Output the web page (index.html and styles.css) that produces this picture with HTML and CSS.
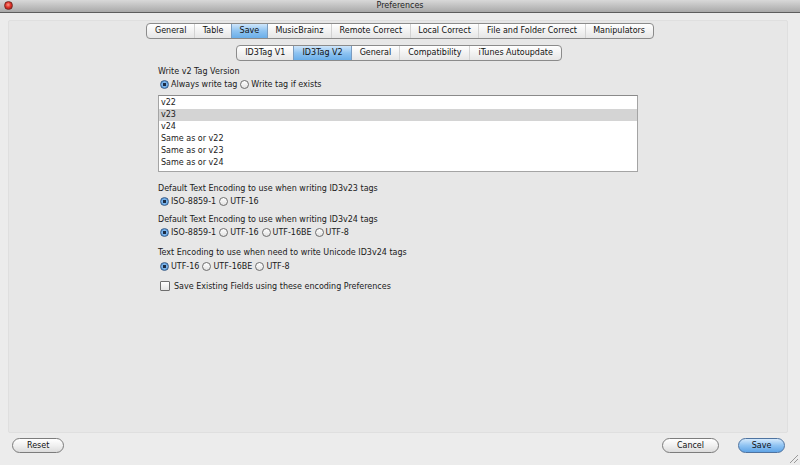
FILE: index.html
```html
<!DOCTYPE html>
<html>
  <head>
    <meta charset="utf-8" />
    <title>Preferences</title>
    <link rel="stylesheet" href="styles.css">
  </head>
  <body>
    <div class="titlebar">
      <span class="close"></span>
      <span class="title">Preferences</span>
    </div>

    <div class="panel">
      <div class="tabs main-tabs">
        <span class="tab">General</span>
        <span class="tab">Table</span>
        <span class="tab selected">Save</span>
        <span class="tab">MusicBrainz</span>
        <span class="tab">Remote Correct</span>
        <span class="tab">Local Correct</span>
        <span class="tab">File and Folder Correct</span>
        <span class="tab">Manipulators</span>
      </div>
      <div class="tabs sub-tabs">
        <span class="tab">ID3Tag V1</span>
        <span class="tab selected">ID3Tag V2</span>
        <span class="tab">General</span>
        <span class="tab">Compatibility</span>
        <span class="tab">iTunes Autoupdate</span>
      </div>

      <div class="content">
        <div class="label">Write v2 Tag Version</div>
        <div class="radios">
          <span class="radio on"></span>Always write tag
          <span class="radio"></span>Write tag if exists
        </div>
        <ul class="list">
          <li>v22</li>
          <li class="selected">v23</li>
          <li>v24</li>
          <li>Same as or v22</li>
          <li>Same as or v23</li>
          <li>Same as or v24</li>
        </ul>

        <div class="label first">Default Text Encoding to use when writing ID3v23 tags</div>
        <div class="radios">
          <span class="radio on"></span>ISO-8859-1
          <span class="radio"></span>UTF-16
        </div>

        <div class="label second">Default Text Encoding to use when writing ID3v24 tags</div>
        <div class="radios">
          <span class="radio on"></span>ISO-8859-1
          <span class="radio"></span>UTF-16
          <span class="radio"></span>UTF-16BE
          <span class="radio"></span>UTF-8
        </div>

        <div class="label third">Text Encoding to use when need to write Unicode ID3v24 tags</div>
        <div class="radios low">
          <span class="radio on"></span>UTF-16
          <span class="radio"></span>UTF-16BE
          <span class="radio"></span>UTF-8
        </div>

        <div class="radios check-row">
          <span class="checkbox"></span>Save Existing Fields using these encoding Preferences
        </div>
      </div>
    </div>

    <div class="footer">
      <button class="btn">Reset</button>
      <span class="spacer"></span>
      <button class="btn">Cancel</button>
      <button class="btn default">Save</button>
    </div>
    <div class="grip"></div>
  </body>
</html>
```

FILE: styles.css
```css
body {
  margin: 0;
  width: 800px;
  height: 465px;
  background-color: #ececec;
  font-family: "DejaVu Sans", sans-serif;
  font-size: 8px;
  color: #1a1a1a;
  position: relative;
  overflow: hidden;
}

.titlebar {
  height: 12px;
  background: linear-gradient(#d8d8d8, #a9a9a9);
  border-bottom: 1px solid #5e5e5e;
  position: relative;
  text-align: center;
}
.titlebar .title {
  line-height: 12px;
  font-size: 8px;
  color: #1e1e1e;
}
.close {
  position: absolute;
  left: 4px;
  top: 1px;
  width: 9px;
  height: 9px;
  border-radius: 50%;
  background: radial-gradient(circle at 45% 40%, #ff9a8a 0, #e0332a 45%, #8e1010 100%);
  border: 1px solid #7a2a22;
  box-sizing: border-box;
}

.panel {
  margin: 7px 12px 0 8px;
  height: 411px;
  background-color: #e7e7e7;
  border: 1px solid #dfdfdf;
  border-radius: 2px;
}

.tabs {
  display: flex;
  width: max-content;
  margin: 0 auto;
  border: 1px solid #8b8b8b;
  border-radius: 4px;
  background: linear-gradient(#ffffff, #f2f2f2 50%, #e6e6e6);
  height: 14px;
  overflow: hidden;
  color: #111;
}
.main-tabs {
  margin-top: 2px;
  transform: translateX(2px);
}
.sub-tabs {
  margin-top: 6px;
  transform: translateX(1px);
}
.tab {
  line-height: 14px;
  padding: 0 8px;
  border-left: 1px solid #d2d2d2;
}
.main-tabs .tab {
  padding: 0 7.6px;
}
.tab:first-child {
  border-left: none;
}
.tab.selected {
  background: linear-gradient(#cfe6fb, #8ec3f1 50%, #6aaee9);
  border-left-color: #7a9cc0;
}
.tab.selected + .tab {
  border-left-color: #7a9cc0;
}

.content {
  padding-left: 149px;
  margin-top: 5px;
}
.label {
  line-height: 11px;
}
.label.first {
  margin-top: 11px;
}
.label.second {
  margin-top: 6px;
}
.label.third {
  margin-top: 8px;
}
.radios {
  display: flex;
  align-items: center;
  height: 14px;
  padding-left: 2px;
}
.radios.low {
  margin-top: 1px;
}
.radio {
  width: 9px;
  height: 9px;
  border-radius: 50%;
  border: 1px solid #6e6e6e;
  background: linear-gradient(#ffffff, #e2e2e2);
  box-sizing: border-box;
  margin: 0 2px 0 3px;
  position: relative;
}
.radios .radio:first-child {
  margin-left: 0;
}
.radio.on {
  background: radial-gradient(circle, #1c2c44 0, #1c2c44 1.5px, #7fb6ea 2px, #3d86d4 100%);
  border-color: #3b5f8a;
}
.checkbox {
  width: 8px;
  height: 8px;
  border: 1px solid #6e6e6e;
  border-radius: 1px;
  background: linear-gradient(#ffffff, #e4e4e4);
  margin-right: 4px;
}
.check-row {
  margin-top: 6px;
}

.list {
  list-style: none;
  margin: 4px 0 0 0;
  padding: 1px 0 2px 0;
  width: 478px;
  background: #ffffff;
  border: 1px solid #a4a4a4;
  border-top-color: #8a8a8a;
}
.list li {
  height: 12px;
  line-height: 12px;
  padding-left: 2px;
}
.list li.selected {
  background-color: #d4d4d4;
}

.footer {
  display: flex;
  align-items: center;
  padding: 0 15px 0 12px;
  margin-top: 5px;
}
.spacer {
  flex: 1;
}
.btn {
  font-family: "DejaVu Sans", sans-serif;
  font-size: 8px;
  color: #111;
  height: 15px;
  border: 1px solid #7c7c7c;
  border-radius: 8px;
  background: linear-gradient(#ffffff, #f0f0f0 50%, #dcdcdc);
  padding: 0 14px;
  min-width: 51px;
  margin-left: 19px;
}
.btn:first-child {
  margin-left: 0;
}
.btn.default {
  background: linear-gradient(#d4e9fc, #8fc3f2 50%, #5fa4e6);
  border-color: #4e73a0;
  min-width: 47px;
  padding: 0 10px;
}

.grip {
  position: absolute;
  right: 2px;
  bottom: 2px;
  width: 8px;
  height: 8px;
  background: linear-gradient(135deg, transparent 45%, #999 45%, #999 52%, transparent 52%, transparent 70%, #999 70%, #999 77%, transparent 77%);
}
```
